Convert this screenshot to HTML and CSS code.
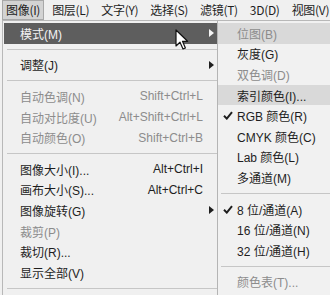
FILE: index.html
```html
<!DOCTYPE html>
<html lang="zh-CN">
<head>
  <meta charset="UTF-8" />
  <title>图像菜单</title>
  <link rel="stylesheet" href="styles.css">
</head>
<body>

<div class="menubar">
  <span class="top-item active">图像(I)</span>
  <span class="top-item">图层(L)</span>
  <span class="top-item">文字(Y)</span>
  <span class="top-item">选择(S)</span>
  <span class="top-item">滤镜(T)</span>
  <span class="top-item">3D(D)</span>
  <span class="top-item">视图(V)</span>
</div>

<div class="menus">
  <div class="menu main">
    <div class="row hover"><span class="label">模式(M)</span><span class="arrow"></span></div>
    <div class="sep"></div>
    <div class="row"><span class="label">调整(J)</span><span class="arrow"></span></div>
    <div class="sep"></div>
    <div class="row off"><span class="label">自动色调(N)</span><span class="key">Shift+Ctrl+L</span></div>
    <div class="row off"><span class="label">自动对比度(U)</span><span class="key">Alt+Shift+Ctrl+L</span></div>
    <div class="row off"><span class="label">自动颜色(O)</span><span class="key">Shift+Ctrl+B</span></div>
    <div class="sep"></div>
    <div class="row"><span class="label">图像大小(I)...</span><span class="key">Alt+Ctrl+I</span></div>
    <div class="row"><span class="label">画布大小(S)...</span><span class="key">Alt+Ctrl+C</span></div>
    <div class="row"><span class="label">图像旋转(G)</span><span class="arrow"></span></div>
    <div class="row off"><span class="label">裁剪(P)</span></div>
    <div class="row"><span class="label">裁切(R)...</span></div>
    <div class="row"><span class="label">显示全部(V)</span></div>
    <div class="sep"></div>
  </div>

  <div class="menu sub">
    <div class="row off lit"><span class="label">位图(B)</span></div>
    <div class="row"><span class="label">灰度(G)</span></div>
    <div class="row off"><span class="label">双色调(D)</span></div>
    <div class="row lit"><span class="label">索引颜色(I)...</span></div>
    <div class="row"><span class="check"><svg width="10" height="9" viewBox="0 0 10 9"><path d="M1 4.8 L3.8 7.6 L9 1.2" fill="none" stroke="#1e1e1e" stroke-width="2"/></svg></span><span class="label">RGB 颜色(R)</span></div>
    <div class="row"><span class="label">CMYK 颜色(C)</span></div>
    <div class="row"><span class="label">Lab 颜色(L)</span></div>
    <div class="row"><span class="label">多通道(M)</span></div>
    <div class="sep"></div>
    <div class="row"><span class="check"><svg width="10" height="9" viewBox="0 0 10 9"><path d="M1 4.8 L3.8 7.6 L9 1.2" fill="none" stroke="#1e1e1e" stroke-width="2"/></svg></span><span class="label">8 位/通道(A)</span></div>
    <div class="row"><span class="label">16 位/通道(N)</span></div>
    <div class="row"><span class="label">32 位/通道(H)</span></div>
    <div class="sep"></div>
    <div class="row off"><span class="label">颜色表(T)...</span></div>
  </div>
</div>

<svg class="cursor" width="14" height="22" viewBox="0 0 14 22">
  <path d="M1 1 L1 17 L5 13.2 L8 20 L10.4 19 L7.5 12.3 L12.6 12.3 Z" fill="#fff" stroke="#111" stroke-width="1.2" stroke-linejoin="round"/>
</svg>

</body>
</html>
```

FILE: styles.css
```css
body {
  margin: 0;
  background: #f0f0f0;
  font-family: "Liberation Sans", "Noto Sans CJK SC", sans-serif;
  font-size: 12px;
  color: #1e1e1e;
  width: 330px;
  height: 295px;
  overflow: hidden;
  position: relative;
}
.menubar {
  display: flex;
  height: 20px;
  align-items: center;
  padding-left: 2px;
  background: #f0f0f0;
  overflow: hidden;
  font-family: "Noto Sans CJK SC", sans-serif;
  letter-spacing: -0.3px;
}
.top-item {
  height: 18px;
  line-height: 18px;
  padding: 0 3px;
  margin-right: 4px;
  border: 1px solid transparent;
  white-space: nowrap;
}
.top-item.active {
  background: #d3d3d3;
  border-color: #a8a8a8;
}
.menus {
  display: flex;
  align-items: flex-start;
  height: 275px;
  overflow: hidden;
}
.menu {
  background: #f0f0f0;
  border: 1px solid #b8b8b8;
  border-bottom: none;
  border-right: none;
  padding-top: 2px;
  height: 274px;
  overflow: hidden;
}
.main {
  margin-left: 2px;
  width: 214px;
  flex: none;
}
.sub {
  flex: 1;
  min-width: 0;
  background: #f1f1f1;
  border-left-color: #b4b4b4;
}
.row {
  height: 20.6px;
  display: flex;
  align-items: center;
  position: relative;
  white-space: nowrap;
}
.main .row {
  padding-left: 17px;
  padding-right: 14px;
}
.sub .row {
  padding-left: 19px;
}
.row .label {
  flex: 1;
}
.row .key {
  text-align: right;
}
.row.off {
  color: #8c8c8c;
}
.row.hover {
  background: #5e5e5e;
  color: #f4f4f4;
  margin-left: 1px;
  padding-left: 16px;
}
.row.lit {
  background: #d9d9d9;
}
.arrow {
  position: absolute;
  right: 3px;
  top: 6px;
  width: 0;
  height: 0;
  border-top: 4.5px solid transparent;
  border-bottom: 4.5px solid transparent;
  border-left: 5px solid #1e1e1e;
}
.hover .arrow {
  border-left-color: #f4f4f4;
}
.check {
  position: absolute;
  left: 5px;
  top: 6px;
  line-height: 0;
}
.sep {
  height: 1px;
  background: #c6c6c6;
  margin: 5px 0 5px 4px;
}
.sub .sep {
  margin-left: 3px;
}
.cursor {
  position: absolute;
  left: 175px;
  top: 29px;
}
```
